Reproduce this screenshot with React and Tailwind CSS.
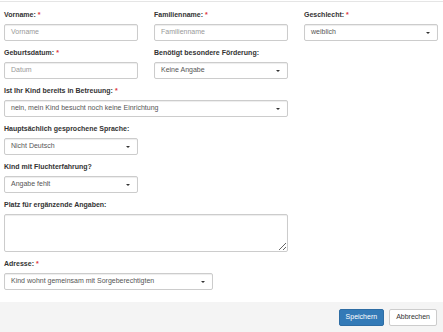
import React from 'react';

const Req = () => <span className="text-[#e0393e] ml-[2px]">*</span>;

const Label = ({ children, req }) => (
  <label className="block text-[7px] leading-[10px] font-bold text-[#333] mb-[4px]">
    {children}
    {req && <Req />}
  </label>
);

const Input = ({ placeholder }) => (
  <div className="h-[17px] border border-[#ccc] rounded-[2px] shadow-[inset_0_1px_1px_rgba(0,0,0,0.075)] bg-white flex items-center pl-[6px] text-[7px] text-[#999]">
    {placeholder}
  </div>
);

const Select = ({ value, className = '' }) => (
  <div
    className={`h-[17px] border border-[#ccc] rounded-[2px] shadow-[inset_0_1px_1px_rgba(0,0,0,0.075)] bg-white flex items-center justify-between pl-[6px] pr-[7px] text-[7px] text-[#555] ${className}`}
  >
    <span>{value}</span>
    <span className="w-0 h-0 border-t-[2px] border-t-[#333] border-x-[2px] border-x-transparent" />
  </div>
);

const Group = ({ children, className = '' }) => <div className={`mb-[7px] ${className}`}>{children}</div>;

export default function App() {
  return (
    <div
      className="w-[443px] h-[332px] bg-white flex flex-col overflow-hidden"
      style={{ fontFamily: '"Liberation Sans", Arial, sans-serif' }}
    >
      <div className="h-[2px] border-b border-[#e5e5e5] shrink-0" />

      <div className="flex-1 px-[4px] pt-[8px]">
        {/* Zeile 1 */}
        <div className="grid grid-cols-[134px_134px_134px] gap-x-[16px]">
          <Group>
            <Label req>Vorname:</Label>
            <Input placeholder="Vorname" />
          </Group>
          <Group>
            <Label req>Familienname:</Label>
            <Input placeholder="Familienname" />
          </Group>
          <Group>
            <Label req>Geschlecht:</Label>
            <Select value="weiblich" />
          </Group>

          {/* Zeile 2 */}
          <Group>
            <Label req>Geburtsdatum:</Label>
            <Input placeholder="Datum" />
          </Group>
          <Group>
            <Label>Benötigt besondere Förderung:</Label>
            <Select value="Keine Angabe" />
          </Group>
          <div />
        </div>

        <Group className="w-[284px]">
          <Label req>Ist Ihr Kind bereits in Betreuung:</Label>
          <Select value="nein, mein Kind besucht noch keine Einrichtung" />
        </Group>

        <Group className="w-[134px]">
          <Label>Hauptsächlich gesprochene Sprache:</Label>
          <Select value="Nicht Deutsch" />
        </Group>

        <Group className="w-[134px]">
          <Label>Kind mit Fluchterfahrung?</Label>
          <Select value="Angabe fehlt" />
        </Group>

        <Group className="w-[284px]">
          <Label>Platz für ergänzende Angaben:</Label>
          <textarea className="block w-full h-[38px] border border-[#ccc] rounded-[2px] shadow-[inset_0_1px_1px_rgba(0,0,0,0.075)] bg-white outline-none" />
        </Group>

        <Group className="w-[209px]">
          <Label req>Adresse:</Label>
          <Select value="Kind wohnt gemeinsam mit Sorgeberechtigten" />
        </Group>
      </div>

      <div className="h-[30px] shrink-0 bg-[#f4f4f4] flex items-center justify-end gap-[5px] pr-[6px]">
        <button className="h-[17px] px-[6px] rounded-[2px] bg-[#337ab7] border border-[#2e6da4] text-white text-[7px]">
          Speichern
        </button>
        <button className="h-[17px] px-[6px] rounded-[2px] bg-white border border-[#ccc] text-[#333] text-[7px]">
          Abbrechen
        </button>
      </div>
    </div>
  );
}
